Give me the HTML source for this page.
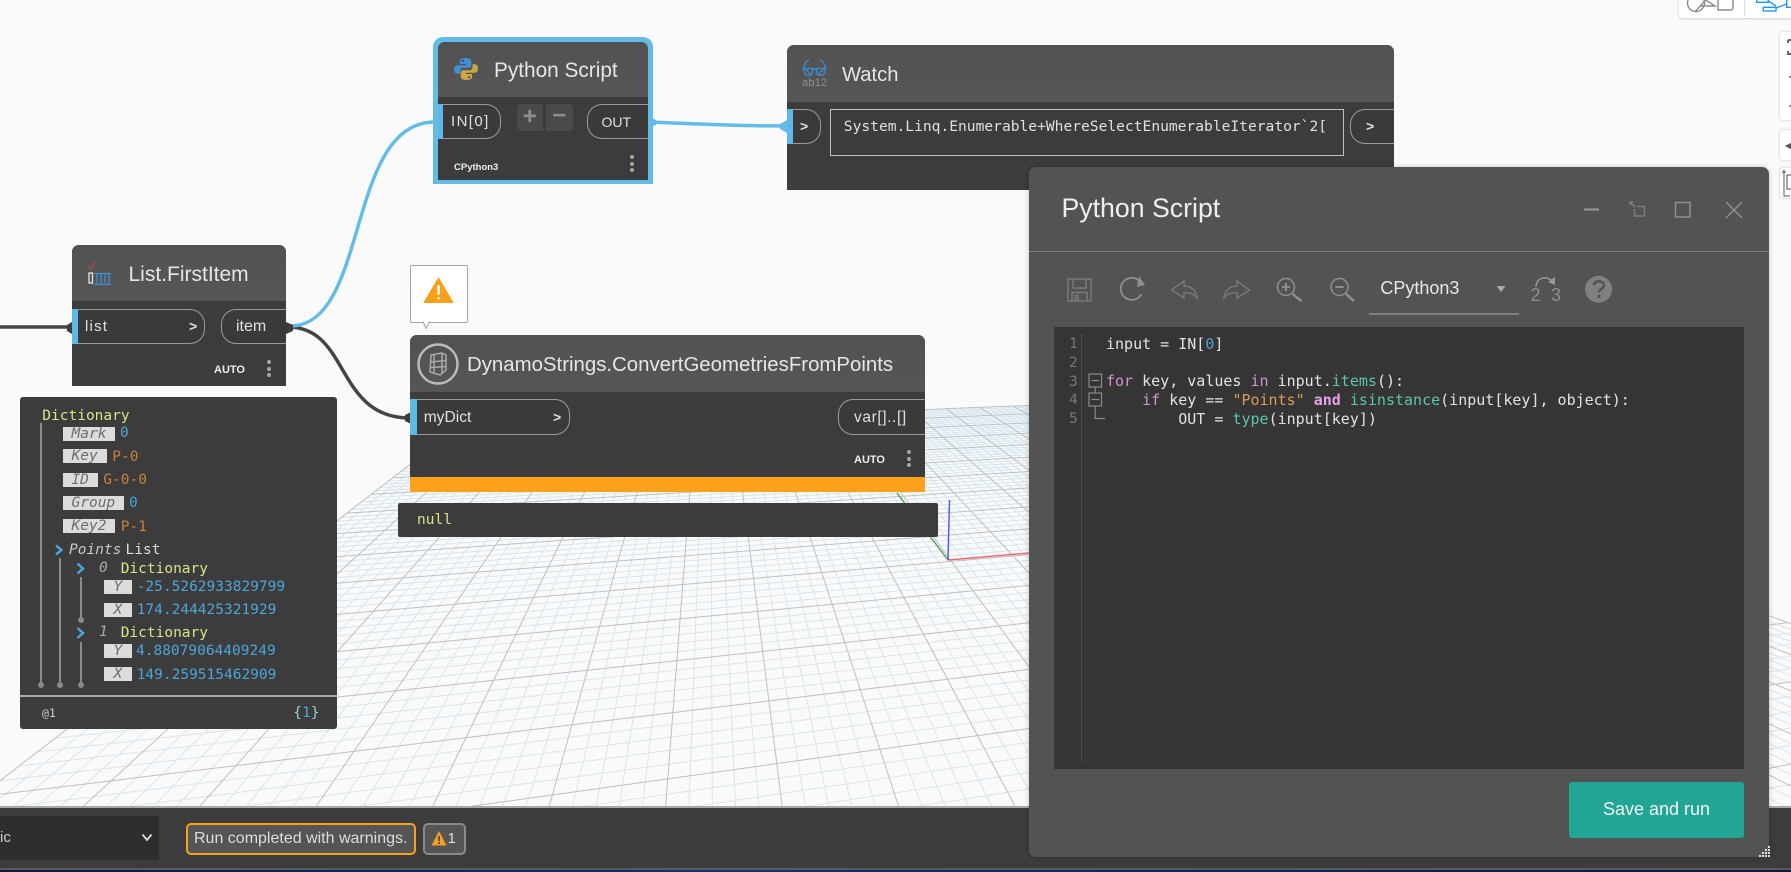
<!DOCTYPE html>
<html><head><meta charset="utf-8"><title>Python Script</title>
<style>
html,body{margin:0;padding:0;width:1791px;height:872px;overflow:hidden;background:#fafafa}
body{position:relative;font-family:"Liberation Sans",sans-serif;color:#e0e0e0}
.a{position:absolute}
.t{position:absolute;white-space:pre;line-height:20px;height:20px}
.m{font-family:"DejaVu Sans Mono","Liberation Mono",monospace;font-size:14.5px}
.node{position:absolute;background:#3c3c3c;border-radius:7px 7px 0 0;overflow:visible}
.hd{position:absolute;left:0;right:0;top:0;background:linear-gradient(#525252,#565656);border-radius:7px 7px 0 0}
.pl{position:absolute;box-sizing:border-box;border:1px solid #9a9a9a;border-left:0;border-radius:0 15px 15px 0;background:#3a3a3a}
.pr{position:absolute;box-sizing:border-box;border:1px solid #9a9a9a;border-right:0;border-radius:15px 0 0 15px;background:#3a3a3a}
.blue{position:absolute;background:#5fb9e6}
.lab{position:absolute;background:#dcdcdc;color:#6e6e6e;font:italic 14.5px/14px "DejaVu Sans Mono",monospace;text-align:center;height:14px}
.bl{color:#4ca5d8}.or{color:#c8823f}.ye{color:#e0e088}
.dot{position:absolute;width:4px;height:4px;border-radius:50%;background:#a5a5a5}
.vl{position:absolute;width:2px;background:#8a8a8a}
.ball{position:absolute;width:6px;height:6px;border-radius:50%;background:#8a8a8a}
.code{font-family:"DejaVu Sans Mono","Liberation Mono",monospace;font-size:15px;color:#e2e2e2;left:1106px}
.pk{color:#d690d8}.te{color:#5cc4b0}.st{color:#d99a5b}
.ln{font-family:"DejaVu Sans Mono",monospace;font-size:14.6px;color:#777;left:1069px}
</style></head><body>

<svg id="grid" class="a" style="left:0;top:0;filter:blur(.35px)" width="1791" height="808" viewBox="0 0 1791 808"></svg>

<svg class="a" style="left:0;top:0" width="1791" height="872" viewBox="0 0 1791 872" fill="none">
<path d="M948 560L1029 553" stroke="#ee6a72" stroke-width="1.5"/>
<path d="M948 560L897 493" stroke="#62a860" stroke-width="1.5"/>
<path d="M948 560L949.5 500" stroke="#5a5ce8" stroke-width="1.5"/>
<path d="M0 327H71" stroke="#444" stroke-width="3.5"/>
<path d="M288 327C350 327 335 418 410 418" stroke="#444" stroke-width="3.5"/>
<path d="M290 326C370 326 345 122 435 122" stroke="#64bce6" stroke-width="3.5"/>
<path d="M650 122C700 124 730 126 787 126" stroke="#64bce6" stroke-width="3.5"/>
<path d="M72 322L67 325V331L72 334Z" fill="#3c3c3c"/>
<path d="M286 322L293 325V331L286 334Z" fill="#3c3c3c"/>
<path d="M411 412L405 415V421L411 424Z" fill="#3c3c3c"/>
<path d="M438 116L433 119V125L438 128Z" fill="#64bce6"/>
<path d="M648 116L656 120V125L648 128Z" fill="#64bce6"/>
<path d="M787 120L780 124V129L787 133Z" fill="#64bce6"/>
</svg>

<!-- Python Script node -->
<div class="a" style="left:433px;top:37px;width:220px;height:147px;background:#64bce6;border-radius:10px 10px 0 0"></div>
<div class="node" style="left:438px;top:42px;width:210px;height:137.5px">
  <div class="hd" style="height:55px"></div>
</div>
<svg class="a" style="left:454px;top:57px" width="24" height="24" viewBox="0 0 24 24">
<path d="M11.5 1C7 1 6 2.5 6 4.5V7H12V8.2H3.6C1.500 8.200 0 10 0 12.300C0 15 1.200 16.700 3.500 16.700H6V13.800C6 11.700 7.500 10.800 9.500 10.800H14.500C16.200 10.800 17.300 9.800 17.300 8V4.500C17.300 2.300 15.500 1 11.500 1Z" fill="#3f8fd8"/>
<path d="M12.500 23C17 23 18 21.500 18 19.500V17H12V15.800H20.400C22.500 15.800 24 14 24 11.700C24 9 22.800 7.300 20.500 7.300H18.500V10.200C18.500 12.300 17 13.200 15 13.200H9.500C7.800 13.200 6.700 14.200 6.700 16V19.500C6.700 21.700 8.500 23 12.500 23Z" fill="#c9a648"/>
<circle cx="9" cy="3.800" r="1" fill="#3c3c3c"/><circle cx="15" cy="20.200" r="1" fill="#3c3c3c"/>
</svg>
<div class="t" style="left:494px;top:61px;font-size:20.800px;color:#e6e6e6">Python Script</div>
<div class="pl" style="left:438px;top:104px;width:63px;height:35px"></div>
<div class="blue" style="left:438px;top:104px;width:5px;height:35px"></div>
<div class="t" style="left:451px;top:112px;font-size:15px;letter-spacing:1.400px">IN[0]</div>
<div class="a" style="left:516.500px;top:104px;width:26.500px;height:26.500px;background:#4a4a4a;border-radius:4px 0 0 4px;color:#8f8f8f;font:bold 24px/26px 'Liberation Sans';text-align:center">+</div>
<div class="a" style="left:545.500px;top:104px;width:27.500px;height:26.500px;background:#4a4a4a;border-radius:0 4px 4px 0;color:#8f8f8f;font:bold 24px/24px 'Liberation Sans';text-align:center">−</div>
<div class="pr" style="left:586.500px;top:104px;width:61.500px;height:35px"></div>
<div class="t" style="left:601.500px;top:112px;font-size:14px">OUT</div>
<div class="t" style="left:454px;top:158px;font-size:9.500px;font-weight:bold;color:#eee">CPython3</div>
<div class="dot" style="left:630px;top:155px"></div><div class="dot" style="left:630px;top:161.500px"></div><div class="dot" style="left:630px;top:168px"></div>

<!-- List.FirstItem -->
<div class="node" style="left:71.500px;top:245.300px;width:214.500px;height:141.200px">
  <div class="hd" style="height:56px"></div>
</div>
<svg class="a" style="left:88px;top:262px" width="24" height="24" viewBox="0 0 24 24" fill="none">
<path d="M0 4L2.500 7L7.500 0" stroke="#a04848" stroke-width="1.600"/>
<rect x="1" y="11" width="3.500" height="10" stroke="#e6e6e6" stroke-width="1.300"/>
<path d="M6 11.500H23M9 11.500V21M13 11.500V21M17 11.500V21M21 11.500V21M5.500 22.300H23" stroke="#3f8fd8" stroke-width="1.300"/>
</svg>
<div class="t" style="left:128.500px;top:265px;font-size:21px;color:#e6e6e6">List.FirstItem</div>
<div class="pl" style="left:71.500px;top:309.300px;width:133.500px;height:34.500px"></div>
<div class="blue" style="left:71.500px;top:309.300px;width:6.500px;height:34.500px"></div>
<div class="t" style="left:85px;top:317px;font-size:15px;letter-spacing:1.200px">list</div>
<div class="t" style="left:189px;top:316px;font-size:14px;font-weight:bold">&gt;</div>
<div class="pr" style="left:220.500px;top:309.300px;width:65.500px;height:34.500px"></div>
<div class="t" style="left:236px;top:317px;font-size:16px">item</div>
<div class="t" style="left:214px;top:360px;font-size:11px;font-weight:bold;color:#eee">AUTO</div>
<div class="dot" style="left:267px;top:360px"></div><div class="dot" style="left:267px;top:366.500px"></div><div class="dot" style="left:267px;top:373px"></div>

<!-- Dictionary watch panel -->
<div class="a" style="left:20px;top:397.300px;width:316.700px;height:331.700px;background:#3c3c3c;border-radius:3px"></div>
<div class="vl" style="left:40.300px;top:423px;height:261px"></div><div class="ball" style="left:38.300px;top:682px"></div>
<div class="vl" style="left:58.700px;top:558px;height:126px"></div><div class="ball" style="left:56.700px;top:682px"></div>
<div class="vl" style="left:79.700px;top:577px;height:42px"></div><div class="ball" style="left:77.700px;top:617px"></div>
<div class="vl" style="left:79.700px;top:642px;height:42px"></div><div class="ball" style="left:77.700px;top:682px"></div>
<div class="a" style="left:20px;top:695px;width:316.700px;height:1.500px;background:#a8a8a8"></div>

<div class="t m ye" style="left:42.300px;top:406px">Dictionary</div>
<div class="lab" style="left:62.700px;top:426.500px;width:52.600px">Mark</div><div class="t m bl" style="left:120px;top:423px">0</div>
<div class="lab" style="left:62.700px;top:449px;width:44px">Key</div><div class="t m or" style="left:112.300px;top:446.500px">P-0</div>
<div class="lab" style="left:62.700px;top:473px;width:35px">ID</div><div class="t m or" style="left:103.300px;top:470px">G-0-0</div>
<div class="lab" style="left:62.700px;top:496px;width:61.300px">Group</div><div class="t m bl" style="left:129px;top:493px">0</div>
<div class="lab" style="left:62.700px;top:519px;width:52.600px">Key2</div><div class="t m or" style="left:120.700px;top:516.500px">P-1</div>
<svg class="a" style="left:54px;top:544px" width="34" height="100" viewBox="0 0 34 100" fill="none" stroke="#4ca5d8" stroke-width="2.500">
<path d="M2 1.500L7.500 6L2 10.500"/><path d="M23.500 19.500L29 24.500L23.500 29.500"/><path d="M23.500 84L29 89L23.500 94"/>
</svg>
<div class="t m" style="left:69px;top:539.500px;font-style:italic;color:#c8c8c8">Points</div>
<div class="t m" style="left:125.500px;top:539.500px;color:#dcdcdc">List</div>
<div class="t m" style="left:99px;top:558px;font-style:italic;color:#aaa">0</div>
<div class="t m ye" style="left:120.700px;top:558.500px">Dictionary</div>
<div class="lab" style="left:104px;top:579.500px;width:27.700px">Y</div><div class="t m bl" style="left:136.700px;top:576.700px">-25.5262933829799</div>
<div class="lab" style="left:104px;top:602.500px;width:27.700px">X</div><div class="t m bl" style="left:136.700px;top:599.500px">174.244425321929</div>
<div class="t m" style="left:99px;top:622px;font-style:italic;color:#aaa">1</div>
<div class="t m ye" style="left:120.700px;top:623px">Dictionary</div>
<div class="lab" style="left:104px;top:644px;width:27.700px">Y</div><div class="t m bl" style="left:136px;top:641px">4.88079064409249</div>
<div class="lab" style="left:104px;top:667px;width:27.700px">X</div><div class="t m bl" style="left:136.700px;top:664.500px">149.259515462909</div>
<div class="t" style="left:42px;top:703px;font:11.500px/20px 'DejaVu Sans Mono',monospace;color:#ccc">@1</div>
<div class="t m" style="left:293.300px;top:702.500px;color:#9cc">{<span class="bl">1</span>}</div>

<!-- Warning bubble -->
<div class="a" style="left:410.300px;top:265px;width:55.500px;height:56px;background:#fff;border:1px solid #a5a5a5;border-radius:2px"></div>
<svg class="a" style="left:410px;top:265px" width="58" height="66" viewBox="0 0 58 66">
<path d="M13 56.500L16 63.500L19.500 56.500" fill="#fff" stroke="#a5a5a5"/><path d="M13.500 56H19V57H13.500Z" fill="#fff"/>
<path d="M28.500 13L43 37.500H14Z" fill="#f9a11b" stroke="#f9a11b" stroke-linejoin="round"/>
<rect x="27.300" y="20" width="2.400" height="10" fill="#fff" rx="1"/><rect x="27.300" y="32" width="2.400" height="2.600" fill="#fff" rx="1.200"/>
</svg>

<!-- Dynamo node -->
<div class="node" style="left:410.300px;top:335.300px;width:514.700px;height:156.400px">
  <div class="hd" style="height:56.500px"></div>
  <div class="a" style="left:0;right:0;top:141.400px;height:15px;background:#fba21a"></div>
</div>
<svg class="a" style="left:416px;top:342px" width="44" height="44" viewBox="0 0 44 44" fill="none">
<circle cx="22" cy="22" r="19.500" stroke="#bdbdbd" stroke-width="2.400"/>
<path d="M15 13L26 11L30 13V28L24 33L14 30ZM18 13V30.500M26 11.500V32M15 20L30 18.500M15 25.500L30 24.500" stroke="#a8a8a8" stroke-width="1.500"/>
</svg>
<div class="t" style="left:467px;top:355px;font-size:20.400px;color:#e6e6e6">DynamoStrings.ConvertGeometriesFromPoints</div>
<div class="pl" style="left:410.300px;top:399px;width:159.700px;height:36px"></div>
<div class="blue" style="left:410.300px;top:399px;width:6.700px;height:36px"></div>
<div class="t" style="left:423.700px;top:408px;font-size:15.600px">myDict</div>
<div class="t" style="left:553px;top:407px;font-size:14px;font-weight:bold">&gt;</div>
<div class="pr" style="left:837.800px;top:399px;width:87.200px;height:36px"></div>
<div class="t" style="left:854px;top:408px;font-size:15.500px;letter-spacing:.6px">var[]..[]</div>
<div class="t" style="left:854px;top:450px;font-size:11px;font-weight:bold;color:#eee">AUTO</div>
<div class="dot" style="left:906.500px;top:450px"></div><div class="dot" style="left:906.500px;top:456.500px"></div><div class="dot" style="left:906.500px;top:463px"></div>
<div class="a" style="left:397.600px;top:502.700px;width:540.400px;height:34px;background:#3c3c3c;border-radius:2px"></div>
<div class="t m ye" style="left:417px;top:510px">null</div>

<!-- Watch -->
<div class="node" style="left:786.600px;top:45.300px;width:607.400px;height:145px">
  <div class="hd" style="height:56.400px"></div>
</div>
<svg class="a" style="left:801px;top:59px" width="27" height="28" viewBox="0 0 27 28" fill="none">
<path d="M3.500 11C2 6 5 2 8 1M23.500 11C25 6 22 2 19 1M2 9.500H12L10.500 16H4.500ZM15 9.500H25L22.500 16H16.500ZM12 10.500H15M4 10L10 15.500M23 10L17 15.500" stroke="#3d86c8" stroke-width="1.400"/>
<text x="1" y="27" font-family="Liberation Sans" font-size="11" textLength="25" lengthAdjust="spacingAndGlyphs" fill="#8f8f8f">ab12</text>
</svg>
<div class="t" style="left:842px;top:64.700px;font-size:20.200px;color:#e6e6e6">Watch</div>
<div class="pl" style="left:786.600px;top:109px;width:34.800px;height:35px"></div>
<div class="blue" style="left:786.600px;top:109px;width:6.400px;height:35px"></div>
<div class="t" style="left:800px;top:116px;font-size:14px;font-weight:bold">&gt;</div>
<div class="a" style="left:829.500px;top:109px;width:512px;height:45px;border:1px solid #c0c0c0;background:#3c3c3c"></div>
<div class="t m" style="left:843.800px;top:116.700px;color:#e0e0e0;font-size:14.600px">System.Linq.Enumerable+WhereSelectEnumerableIterator`2[</div>
<div class="pr" style="left:1350.400px;top:109px;width:43.600px;height:35px"></div>
<div class="t" style="left:1366px;top:116px;font-size:14px;font-weight:bold">&gt;</div>

<!-- Bottom bar -->
<div class="a" style="left:0;top:806px;width:1791px;height:2px;background:#a8a8a8"></div>
<div class="a" style="left:0;top:808px;width:1791px;height:60px;background:#3c3c3c"></div>
<div class="a" style="left:0;top:868px;width:1791px;height:1.500px;background:#5a5a5a"></div>
<div class="a" style="left:0;top:869.500px;width:1791px;height:2.500px;background:linear-gradient(90deg,#0d1b3e,#14306e 40%,#0d1b3e)"></div>
<div class="a" style="left:0;top:815.700px;width:159px;height:44.300px;background:#2e2e2e"></div>
<div class="t" style="left:0;top:828px;font-size:15px;color:#ccc">ic</div>
<svg class="a" style="left:141px;top:833px" width="12" height="9" viewBox="0 0 12 9" fill="none"><path d="M1.500 1.500L6 7L10.500 1.500" stroke="#ddd" stroke-width="1.800"/></svg>
<div class="a" style="left:185.700px;top:823px;width:226.700px;height:28px;border:2px solid #f5a01f;border-radius:5px;background:#555"></div>
<div class="t" style="left:194px;top:829px;font-size:16px;color:#ddd">Run completed with warnings.</div>
<div class="a" style="left:423px;top:823px;width:39px;height:28px;border:2px solid #8a8a8a;border-radius:5px;background:#555"></div>
<svg class="a" style="left:431px;top:830px" width="17" height="17" viewBox="0 0 17 17"><path d="M8 1L15.500 15.500H.5Z" fill="#f5a01f"/><rect x="7" y="6" width="2" height="5" fill="#555"/><rect x="7" y="12" width="2" height="2" fill="#555"/></svg>
<div class="t" style="left:447.500px;top:829px;font-size:15px;color:#ddd">1</div>

<!-- Top right -->
<div class="a" style="left:1679px;top:-2px;width:112px;height:19.500px;background:#fff;box-shadow:0 1px 2px #ccc;border-radius:0 0 0 3px"></div>
<div class="a" style="left:1744px;top:0;width:1px;height:17px;background:#ddd"></div>
<svg class="a" style="left:1679px;top:0" width="112" height="18" viewBox="0 0 112 18" fill="none">
<circle cx="17" cy="3" r="8.500" stroke="#8c8c8c" stroke-width="1.400"/>
<path d="M16 11.700L26.700 0L36 6H21" stroke="#8c8c8c" stroke-width="1.400"/>
<path d="M39 0V10H52C53 10 54 9 54 8V0" stroke="#8c8c8c" stroke-width="1.400"/>
<g stroke="#2196f3" stroke-width="1.400"><rect x="77.700" y="-3" width="11.600" height="5.300"/><rect x="84.300" y="7.300" width="12.700" height="3.700"/><rect x="107.700" y="-3" width="8" height="10.300"/><path d="M89 1L97 6M97 8L107.700 4"/></g>
</svg>
<div class="a" style="left:1780px;top:31.700px;width:11px;height:88px;background:#fff;box-shadow:0 0 2px #bbb;border-radius:3px 0 0 3px"></div>
<div class="a" style="left:1780px;top:130px;width:11px;height:30px;background:#fff;box-shadow:0 0 2px #bbb;border-radius:3px 0 0 3px"></div>
<div class="a" style="left:1780px;top:167.700px;width:11px;height:30px;background:#fff;box-shadow:0 0 2px #bbb;border-radius:3px 0 0 3px"></div>
<svg class="a" style="left:1780px;top:30px" width="11" height="170" viewBox="0 0 11 170" fill="none">
<path d="M8 10H11M8 10V13M8 21V24H11" stroke="#666" stroke-width="2"/>
<path d="M9 47H11M9 76H11" stroke="#666" stroke-width="1.500"/>
<path d="M11 114L7 116L11 118Z" fill="#555" stroke="#555" stroke-width="2"/>
<path d="M4 140V166H10M4 140L2.500 143M4 140L5.500 143" stroke="#777" stroke-width="1.200"/>
<rect x="7" y="145" width="6" height="14" stroke="#666" stroke-width="1.200"/>
</svg>

<!-- Python dialog -->
<div class="a" style="left:1028.800px;top:167px;width:740px;height:689.700px;background:#535353;border-radius:7px;box-shadow:0 0 6px rgba(0,0,0,.22)"></div>
<div class="t" style="left:1061.500px;top:198px;font-size:26.700px;color:#eee">Python Script</div>
<div class="a" style="left:1028.800px;top:250.500px;width:740px;height:1px;background:#7b7b7b"></div>
<svg class="a" style="left:0;top:0" width="1791" height="872" viewBox="0 0 1791 872" fill="none" stroke="#8a8a8a" stroke-width="1.500">
<path d="M1584 209.500H1599" stroke="#999" stroke-width="2"/>
<path d="M1630 202L1635 207M1630 205V202H1633M1637 206.500H1644.500V216H1634.500V209" stroke="#7d7d7d"/>
<rect x="1675.500" y="202.500" width="14.500" height="14.500" stroke="#8f8f8f"/>
<path d="M1726 202L1742 218M1742 202L1726 218" stroke="#8f8f8f"/>
<path d="M1068 279H1091V301H1068ZM1073 279V288H1086V279M1072 301V292.500H1087V301M1075 295.500H1078V299H1075Z" stroke="#7a7a7a"/>
<path d="M1140 281.500A11 11 0 1 0 1141.500 294" stroke="#8f8f8f" stroke-width="1.800"/>
<path d="M1139 276L1145 285L1137 287Z" fill="#8f8f8f" stroke="none"/>
<path d="M1184 281L1171.500 290L1184 298V293C1190 292 1194 294 1197 298C1196 290 1191 286 1184 286Z" stroke="#777"/>
<path d="M1237 281L1249.500 290L1237 298V293C1231 292 1227 294 1224 298C1225 290 1230 286 1237 286Z" stroke="#777"/>
<circle cx="1286" cy="287" r="8.500" stroke="#8f8f8f"/><path d="M1282 287H1290M1286 283V291" stroke="#8f8f8f" stroke-width="2"/><path d="M1292.500 294L1301.500 301" stroke="#8f8f8f" stroke-width="2.500"/>
<circle cx="1339.500" cy="287" r="8.500" stroke="#8f8f8f"/><path d="M1335.500 287H1343.500" stroke="#8f8f8f" stroke-width="2"/><path d="M1346 294L1354 301" stroke="#8f8f8f" stroke-width="2.500"/>
<path d="M1496.500 286H1505.500L1501 292Z" fill="#aaa" stroke="none"/>
<path d="M1369 314H1519" stroke="#8f8f8f"/>
<path d="M1536 287C1536 279 1544 275 1551 280L1553 283" stroke="#9a9a9a"/><path d="M1555 277L1555 285L1548 282Z" fill="#9a9a9a" stroke="none"/>
<circle cx="1598.600" cy="289.300" r="13.500" fill="#808080" stroke="none"/>
<path d="M1594 285C1594 280 1604 280 1604 285.500C1604 288.500 1599 288.500 1599 292.500" stroke="#535353" stroke-width="2.600"/><path d="M1599 295V298" stroke="#535353" stroke-width="2.600"/>
</svg>
<div class="t" style="left:1380.400px;top:278px;font-size:18px;color:#e8e8e8">CPython3</div>
<div class="t" style="left:1530.500px;top:285px;font-size:18px;color:#8e8e8e">2</div>
<div class="t" style="left:1551px;top:285px;font-size:18px;color:#8e8e8e">3</div>

<!-- Code editor -->
<div class="a" style="left:1054px;top:327px;width:690px;height:442px;background:#353535"></div>
<div class="a" style="left:1080.500px;top:334px;width:0;height:428px;border-left:1px dotted #5c5c5c"></div>
<div class="t ln" style="top:333.800px">1</div>
<div class="t ln" style="top:352.500px">2</div>
<div class="t ln" style="top:371.500px">3</div>
<div class="t ln" style="top:390.200px">4</div>
<div class="t ln" style="top:408.800px">5</div>
<div class="t code" style="top:333.500px">input = IN[<span style="color:#4a9fd0">0</span>]</div>
<div class="t code" style="top:371.300px"><span class="pk">for</span> key, values <span class="pk">in</span> input.<span class="te">items</span>():</div>
<div class="t code" style="top:390px">    <span class="pk">if</span> key == <span class="st">"Points"</span> <span style="color:#e8a0ea;font-weight:bold">and</span> <span class="te">isinstance</span>(input[key], object):</div>
<div class="t code" style="top:408.700px">        OUT = <span class="te">type</span>(input[key])</div>
<svg class="a" style="left:1087px;top:372px" width="20" height="52" viewBox="0 0 20 52" fill="none" stroke="#8a8a8a" stroke-width="1.200">
<rect x="2" y="2" width="12.500" height="13"/><path d="M4.500 8.500H12"/>
<path d="M8.200 15V21"/>
<rect x="2" y="21" width="12.500" height="13"/><path d="M4.500 27.500H12"/>
<path d="M8.200 34V46.500H18"/>
</svg>

<!-- Save and run -->
<div class="a" style="left:1569px;top:782px;width:175px;height:56.300px;background:#21a594;border-radius:3px;color:#f2f2f2;font-size:18px;line-height:54px;text-align:center">Save and run</div>
<svg class="a" style="left:1756px;top:844px" width="16" height="16" viewBox="0 0 16 16" fill="#ddd">
<rect x="12" y="2" width="2" height="2"/><rect x="12" y="5" width="2" height="2"/><rect x="9" y="5" width="2" height="2"/><rect x="12" y="8" width="2" height="2"/><rect x="9" y="8" width="2" height="2"/><rect x="6" y="8" width="2" height="2"/><rect x="12" y="11" width="2" height="2"/><rect x="9" y="11" width="2" height="2"/><rect x="6" y="11" width="2" height="2"/><rect x="3" y="11" width="2" height="2"/>
</svg>

<script>
(function(){
var V1=[710,233],V2=[4300,272],W=1791,H=808;
function lineA(u){return [V1,[665.7+116.4*u,806]];}
function lineB(v){return [V2,[710,233+1/(.001852+.000253*v)]];}
function X(l,m){
 var a=l[0],b=l[1],c=m[0],d=m[1];
 var r1=b[0]-a[0],s1=b[1]-a[1],r2=d[0]-c[0],s2=d[1]-c[1];
 var den=r1*s2-s1*r2;
 var t=((c[0]-a[0])*s2-(c[1]-a[1])*r2)/den;
 return [a[0]+t*r1,a[1]+t*s1];
}
function seg(p,q){
 var dx=q[0]-p[0],dy=q[1]-p[1],t0=0,t1=1;
 var P=[-dx,dx,-dy,dy],Q=[p[0],W-p[0],p[1],H-p[1]];
 for(var k=0;k<4;k++){
  if(P[k]===0){if(Q[k]<0)return '';continue;}
  var r=Q[k]/P[k];
  if(P[k]<0){if(r>t0)t0=r;}else{if(r<t1)t1=r;}
 }
 if(t0>=t1)return '';
 return 'M'+(p[0]+t0*dx).toFixed(1)+' '+(p[1]+t0*dy).toFixed(1)+'L'+(p[0]+t1*dx).toFixed(1)+' '+(p[1]+t1*dy).toFixed(1);
}
var minor='',major='';
var far=lineB(14),near=lineB(-4),lft=lineA(-6),rgt=lineA(14);
for(var i=-30;i<=70;i++){
 var l=lineA(i/5),d=seg(X(l,far),X(l,near));
 if(i%5===0)major+=d;else minor+=d;
}
for(var j=-20;j<=70;j++){
 var m=lineB(j/5),e=seg(X(m,lft),X(m,rgt));
 if(j%5===0)major+=e;else minor+=e;
}
var ns='http://www.w3.org/2000/svg',g=document.getElementById('grid');
function add(d,c,w){var p=document.createElementNS(ns,'path');p.setAttribute('d',d);p.setAttribute('fill','none');p.setAttribute('stroke',c);p.setAttribute('stroke-width',w);g.appendChild(p);}
add(minor,'#d6e5ef','1');
add(major,'#b9c1c6','1');
})();
</script>
</body></html>
